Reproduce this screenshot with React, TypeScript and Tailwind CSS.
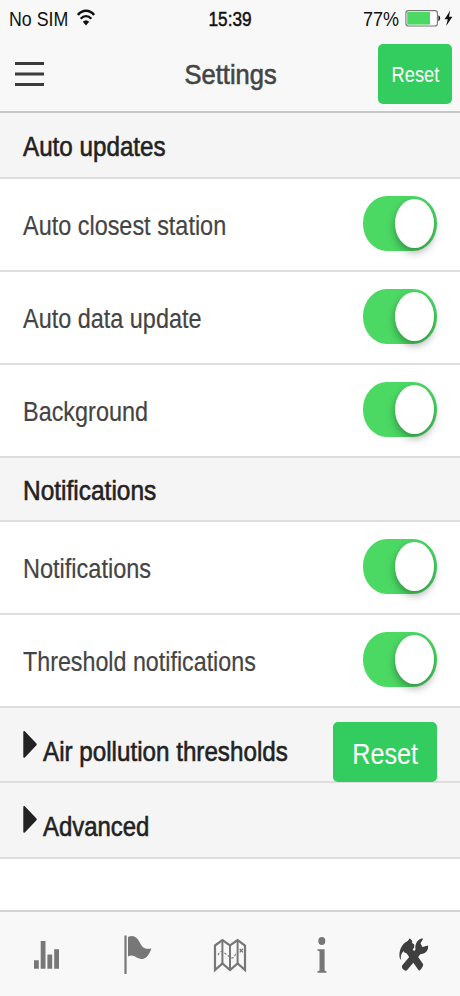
import { useState } from 'react';
import type { ReactNode } from 'react';

const FONT = "font-['Liberation_Sans',Arial,sans-serif]";

function Toggle({ label }: { label: string }) {
  const [on, setOn] = useState(true);

  return (
    <button
      role="switch"
      aria-checked={on}
      aria-label={label}
      onClick={() => setOn(!on)}
      className={`mt-[17px] flex h-[55px] w-[74px] items-start rounded-[24px/27px] pr-[3px] pl-[2.5px] pt-[3px] ${
        on ? 'justify-end bg-[#4bd964]' : 'justify-start bg-[#e5e5e5]'
      }`}
    >
      <span className="h-[49px] w-[39px] rounded-[50%] bg-white shadow-[0_4px_8px_rgba(0,0,0,0.35)]"></span>
    </button>
  );
}

function ToggleRow({ label, scale }: { label: string; scale: string }) {
  return (
    <div className="flex h-[93px] items-start justify-between border-b-2 border-[#dedede] bg-white pr-[23px] pl-[23px]">
      <span
        className={`mt-[31px] origin-left text-[27.5px] leading-8 whitespace-nowrap text-[#444] [-webkit-text-stroke:0.2px_#444] ${scale}`}
      >
        {label}
      </span>
      <Toggle label={label} />
    </div>
  );
}

function SectionTitle({ className, children }: { className: string; children: ReactNode }) {
  return (
    <h2
      className={`origin-left text-[27.5px] leading-8 whitespace-nowrap text-[#222] [-webkit-text-stroke:0.6px_#222] ${className}`}
    >
      {children}
    </h2>
  );
}

function Caret() {
  return (
    <svg className="mt-[22px] h-[29px] w-[15px] shrink-0" viewBox="0 0 15 29" fill="#222">
      <path d="M0.3 1.8C0.3 0.8 1.2 0.6 1.8 1.3L13.2 13.3C13.9 14.1 13.9 14.8 13.2 15.6L1.8 27.4C1.2 28.1 0.3 27.9 0.3 27Z" />
    </svg>
  );
}

function StatusBar() {
  return (
    <div className="flex h-9 items-start text-xl leading-6 text-[#111]">
      <div className="flex w-[153px] pt-[7px] pl-[9px]">
        <span className="w-[68px] origin-left scale-x-[0.89] whitespace-nowrap">No SIM</span>
        <svg className="mt-[2px] h-[17px] w-[18px]" viewBox="0 0 18 17" fill="none" stroke="#111">
          <path d="M0.9 5.9C5.4 0.3 12.6 0.3 17.1 5.9" strokeWidth="2.5" />
          <path d="M3.7 9.8C6.8 6.1 11.2 6.1 14.3 9.8" strokeWidth="2.3" />
          <path d="M5.8 12.8Q9 9.6 12.2 12.8L9 16.4Z" fill="#111" stroke="none" />
        </svg>
      </div>
      <div className="flex w-[154px] justify-center pt-[7px]">
        <span className="scale-x-[0.86] [-webkit-text-stroke:0.5px_#111]">15:39</span>
      </div>
      <div className="flex w-[153px] pt-[7px] pl-[56px]">
        <span className="w-[42px] origin-left scale-x-[0.9]">77%</span>
        <svg className="mt-[2px] h-[19px] w-[50px]" viewBox="0 0 50 19">
          <rect x="0.9" y="1.6" width="31.5" height="15.4" rx="2.6" fill="#fff" stroke="#777" strokeWidth="1.1" />
          <rect x="2.2" y="3" width="22.8" height="12.6" fill="#4bd964" />
          <path d="M33.4 6.3Q35.2 6.8 35.2 9.3Q35.2 11.8 33.4 12.3Z" fill="#222" />
          <path d="M45.2 1.5L39.6 10.2H42.8L41.2 17L47.4 7.8H44Z" fill="#111" />
        </svg>
      </div>
    </div>
  );
}

function TabBar() {
  return (
    <nav className="flex h-[86px] border-t-2 border-[#d3d3d3] bg-[#f8f8f8] pt-[20px] text-[#777]">
      <button className="flex flex-1 justify-center" aria-label="Statistics">
        <svg width="40" height="48" viewBox="0 0 40 48" fill="currentColor">
          <path d="M8 28.2h4.8v8.5H8zM14.7 9h4.8v27.7h-4.8zM21.4 22.5h4.8v14.2h-4.8zM28.2 17.3H33v19.4h-4.8z" />
        </svg>
      </button>
      <button className="flex flex-1 justify-center" aria-label="Stations">
        <svg width="40" height="48" viewBox="0 0 40 48" fill="currentColor">
          <path d="M6.4 3.5h2.2v38.5H6.4zM10 5C16 2.2 19.5 6 22 11C25 16.8 28 17.3 33.5 16.4C31 23 28 27 23.5 27C18 27 16 21.5 10 24.5Z" />
        </svg>
      </button>
      <button className="flex flex-1 justify-center" aria-label="Map">
        <svg width="40" height="48" viewBox="0 0 40 48" fill="none" stroke="currentColor" strokeWidth="2.2">
          <path d="M5 13.5L12.4 8L20 13.5L27.6 8L35 13.5V38L27.6 31.5L20 38L12.4 31.5L5 38Z" />
          <path d="M12.4 8V31.5M20 13.5V38M27.6 8V31.5" strokeWidth="2" />
          <path d="M8 23Q10.5 17.5 14 20.5T21 25.5T26 20" strokeWidth="1.1" strokeDasharray="2.5 1.7" />
          <path d="M29.7 17l3.2 3.4m0-3.4l-3.2 3.4" strokeWidth="1.3" />
        </svg>
      </button>
      <button className="flex flex-1 justify-center" aria-label="Information">
        <svg width="40" height="48" viewBox="0 0 40 48" fill="currentColor">
          <ellipse cx="19.8" cy="9" rx="3.5" ry="4.1" />
          <path d="M15.4 17.2H22.6V38.6L24.5 39.4V40.7H15.4V39.4L17.5 38.6V19.2L15.4 18.4Z" />
        </svg>
      </button>
      <button className="flex flex-1 justify-center text-[#3f3f3f]" aria-label="Settings">
        <svg width="40" height="48" viewBox="0 0 40 48" fill="currentColor">
          <path d="M6.8 28C5 26 5 20.5 6.7 16.5C8.2 12.7 10.8 10.3 13.7 9L15.8 6.2L18.2 9L18.1 11L20.2 12.6V15.4L18.7 17.3L29 32C30 33.5 26.4 38.9 24.8 38.6L12.5 21.2L10.3 20.4L9.7 18.9C7.3 21 6.5 24 6.8 28Z" />
          <path d="M29.3 6.6L26.5 11.3L28.4 15.1L33.9 13.5C35.2 17.5 31.5 22.3 26.6 21.9L13.2 38C11.3 40.3 6.5 36 8.3 33.3L21.5 17.6C20.4 11.5 24.6 5.8 29.3 6.6Z" />
        </svg>
      </button>
    </nav>
  );
}

export default function App() {
  return (
    <div className={`flex h-[996px] w-[460px] flex-col overflow-hidden bg-white ${FONT}`}>
      <header className="h-[113px] shrink-0 border-b-2 border-[#c8c8c8] bg-[#f8f8f8]">
        <StatusBar />
        <div className="flex items-start justify-between pr-[8px] pl-[15px]">
          <button className="mt-[25px] w-[68px]" aria-label="Menu">
            <svg width="29" height="26" viewBox="0 0 29 26" fill="none" stroke="#3b3b3b" strokeWidth="3.2">
              <path d="M0 2.5H29M0 13H29M0 23.5H29" />
            </svg>
          </button>
          <h1 className="mt-[23px] scale-x-[0.91] text-[28px] leading-8 text-[#444] [-webkit-text-stroke:0.6px_#444]">
            Settings
          </h1>
          <button className="mt-2 flex h-[60px] w-[74px] items-center justify-center rounded-[5px] bg-[#33cd5f] pt-[2px] text-[22.5px] text-white">
            <span className="scale-x-[0.81]">Reset</span>
          </button>
        </div>
      </header>

      <main className="flex-1">
        <div className="flex h-[66px] items-start border-b-2 border-[#dedede] bg-[#f5f5f5] pl-[23px]">
          <SectionTitle className="mt-[18px] scale-x-[0.88]">Auto updates</SectionTitle>
        </div>
        <ToggleRow label="Auto closest station" scale="scale-x-[0.852]" />
        <ToggleRow label="Auto data update" scale="scale-x-[0.852]" />
        <ToggleRow label="Background" scale="scale-x-[0.852]" />

        <div className="flex h-[64px] items-start border-b-2 border-[#dedede] bg-[#f5f5f5] pl-[23px]">
          <SectionTitle className="mt-[17px] scale-x-[0.89]">Notifications</SectionTitle>
        </div>
        <ToggleRow label="Notifications" scale="scale-x-[0.855]" />
        <ToggleRow label="Threshold notifications" scale="scale-x-[0.846]" />

        <div className="flex h-[75px] items-start border-b-2 border-[#dedede] bg-[#f5f5f5] pl-[23px]">
          <Caret />
          <SectionTitle className="mt-[28px] ml-[5px] w-[290px] scale-x-[0.88]">Air pollution thresholds</SectionTitle>
          <button className="mt-[14px] flex h-[60px] w-[104px] items-center justify-center rounded-[5px] bg-[#33cd5f] pt-[3px] text-[30px] text-white">
            <span className="scale-x-[0.84]">Reset</span>
          </button>
        </div>
        <div className="flex h-[76px] items-start border-b-2 border-[#dedede] bg-[#f5f5f5] pl-[23px]">
          <Caret />
          <SectionTitle className="mt-[28px] ml-[5px] scale-x-[0.87]">Advanced</SectionTitle>
        </div>
      </main>

      <TabBar />
    </div>
  );
}
